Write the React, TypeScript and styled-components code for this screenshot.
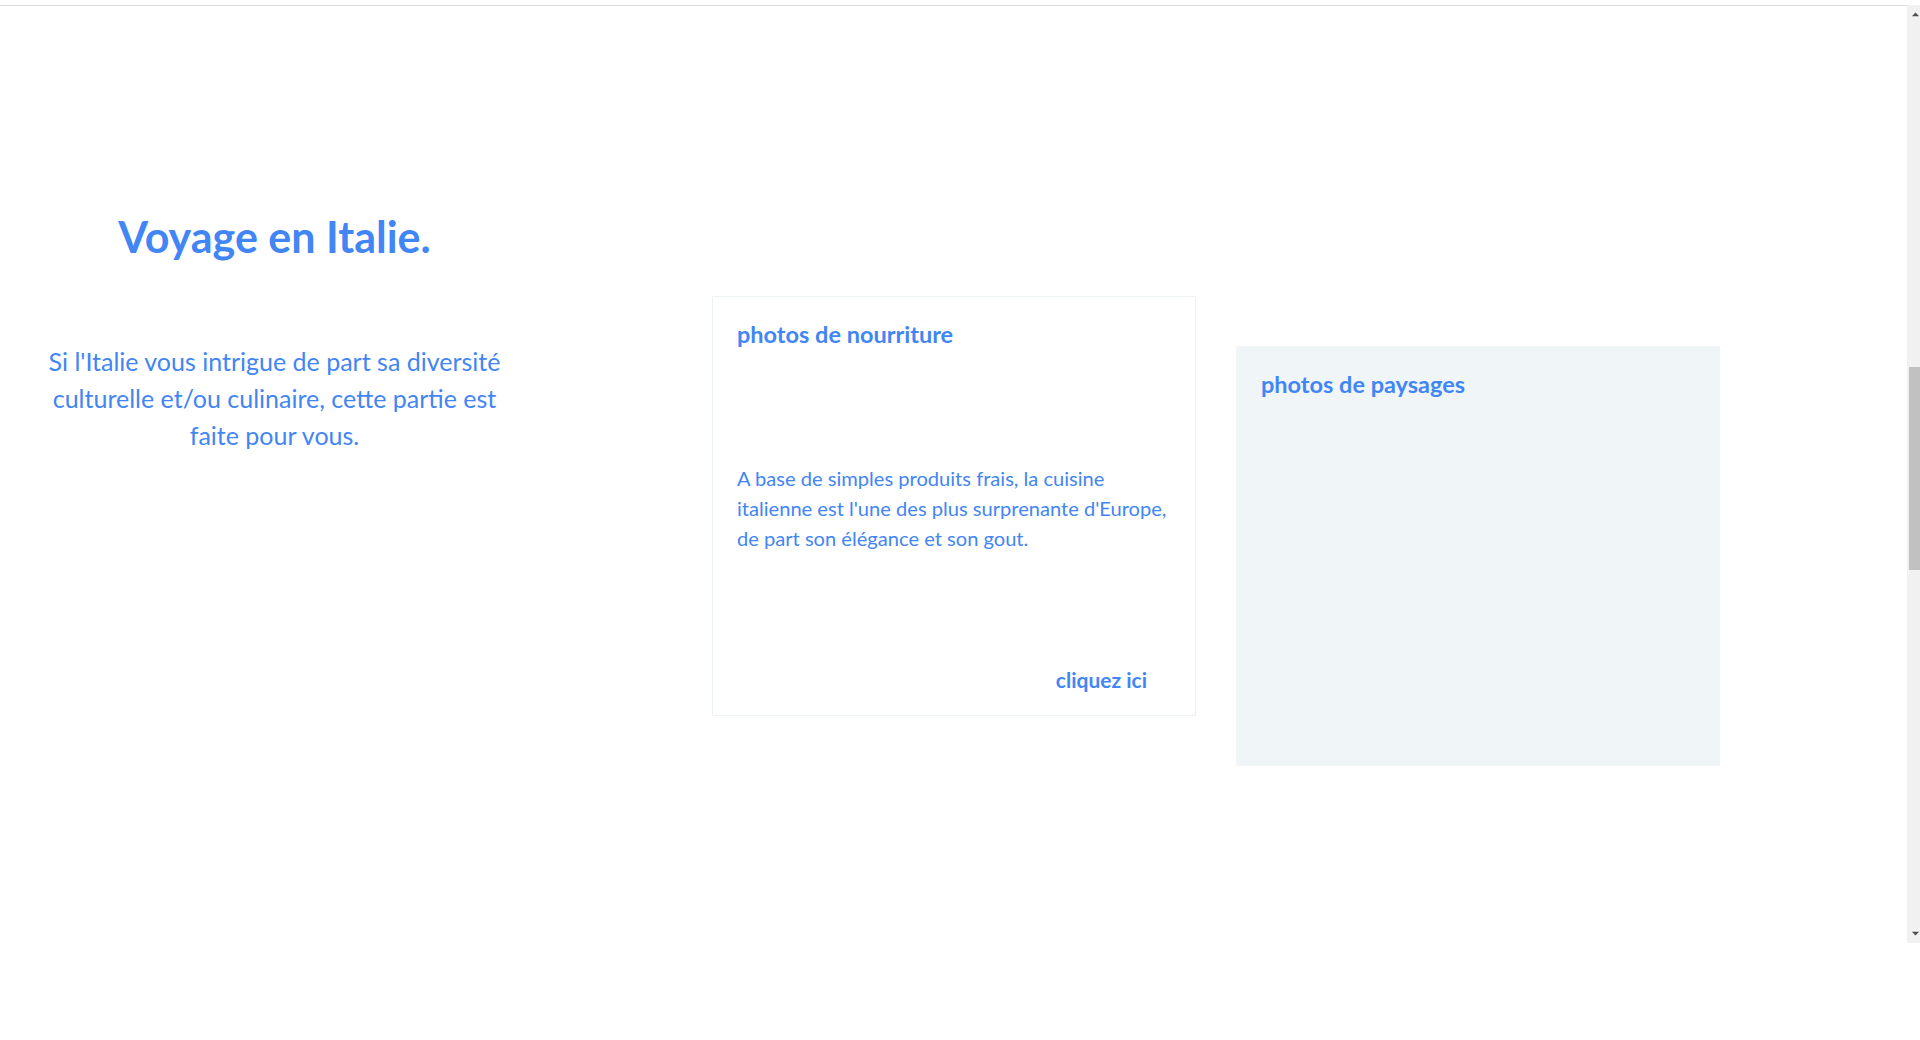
import React from "react";
import styled, { createGlobalStyle } from "styled-components";

const BLUE = "#4285f4";

const GlobalStyle = createGlobalStyle`
  html, body {
    margin: 0;
    padding: 0;
    background: #ffffff;
    overflow: hidden;
  }
  body {
    font-family: Lato, "Open Sans", "Noto Sans", sans-serif;
    color: ${BLUE};
  }
  * { box-sizing: border-box; }
`;

const Shell = styled.div`
  margin-top: 5px;
  height: 938px;
  display: flex;
`;

const Viewport = styled.div`
  flex: 1;
  min-width: 0;
  overflow: hidden;
  background: #ffffff;
`;

const ScrollBar = styled.div`
  flex: none;
  width: 13px;
  display: flex;
  flex-direction: column;
  background: #f1f1f1;
`;

const ArrowButton = styled.div`
  flex: none;
  height: 17px;
  display: flex;
  svg {
    display: block;
  }
`;

const Track = styled.div<{ $offset: number }>`
  flex: 1;
  padding-top: ${(p) => p.$offset}px;
`;

const Thumb = styled.div<{ $size: number }>`
  margin-left: 2px;
  height: ${(p) => p.$size}px;
  background: #c1c1c1;
`;

const ItalySection = styled.section`
  display: flex;
  align-items: flex-start;
  height: 100%;
  border-top: 1px solid #dcdcdc;
`;

const IntroColumn = styled.div`
  flex: none;
  width: 549px;
  padding-top: 205px;
  text-align: center;
`;

const Title = styled.h1`
  margin: 0;
  font-size: 43px;
  line-height: 1.2;
  font-weight: 700;
  color: ${BLUE};
`;

const Intro = styled.p`
  margin: 80px auto 0;
  width: 472px;
  font-size: 25px;
  line-height: 37px;
  font-weight: 400;
  color: ${BLUE};
`;

const CardRow = styled.div`
  display: flex;
  align-items: flex-start;
  gap: 40px;
  padding-top: 290px;
  padding-left: 163px;
`;

const Card = styled.article<{ $raised?: boolean }>`
  width: 484px;
  height: 420px;
  margin-top: ${(p) => (p.$raised ? "0" : "50px")};
  padding: 23px 24px;
  display: flex;
  flex-direction: column;
  justify-content: space-between;
  background: ${(p) => (p.$raised ? "#ffffff" : "#f0f5f8")};
  border: 1px solid ${(p) => (p.$raised ? "#edf2f6" : "#f0f5f8")};
`;

const CardTitle = styled.h2`
  margin: 0;
  font-size: 23.5px;
  line-height: 1.2;
  font-weight: 700;
  color: ${BLUE};
`;

const CardText = styled.p`
  margin: 0;
  font-size: 20.1px;
  line-height: 30px;
  font-weight: 400;
  color: ${BLUE};
`;

const CardLink = styled.a`
  align-self: flex-end;
  margin-right: 24px;
  font-size: 21px;
  line-height: 1.2;
  font-weight: 700;
  color: ${BLUE};
  text-decoration: none;
  cursor: pointer;
`;

const Placeholder = styled.div`
  height: 1px;
`;

const UpArrow = () => (
  <svg width="13" height="17" viewBox="0 0 13 17" aria-hidden="true">
    <polygon points="8.5,7.6 12.1,11.2 4.9,11.2" fill="#505050" />
  </svg>
);

const DownArrow = () => (
  <svg width="13" height="17" viewBox="0 0 13 17" aria-hidden="true">
    <polygon points="4.9,5.8 12.1,5.8 8.5,9.4" fill="#505050" />
  </svg>
);

export default function App() {
  return (
    <>
      <GlobalStyle />
      <Shell>
        <Viewport>
          <ItalySection>
            <IntroColumn>
              <Title>Voyage en Italie.</Title>
              <Intro>
                Si l'Italie vous intrigue de part sa diversité culturelle et/ou
                culinaire, cette partie est faite pour vous.
              </Intro>
            </IntroColumn>
            <CardRow>
              <Card $raised>
                <CardTitle>photos de nourriture</CardTitle>
                <CardText>
                  A base de simples produits frais, la cuisine italienne est
                  l'une des plus surprenante d'Europe, de part son élégance et
                  son gout.
                </CardText>
                <CardLink>cliquez ici</CardLink>
              </Card>
              <Card>
                <CardTitle>photos de paysages</CardTitle>
                <Placeholder />
              </Card>
            </CardRow>
          </ItalySection>
        </Viewport>
        <ScrollBar>
          <ArrowButton>
            <UpArrow />
          </ArrowButton>
          <Track $offset={345}>
            <Thumb $size={203} />
          </Track>
          <ArrowButton>
            <DownArrow />
          </ArrowButton>
        </ScrollBar>
      </Shell>
    </>
  );
}
